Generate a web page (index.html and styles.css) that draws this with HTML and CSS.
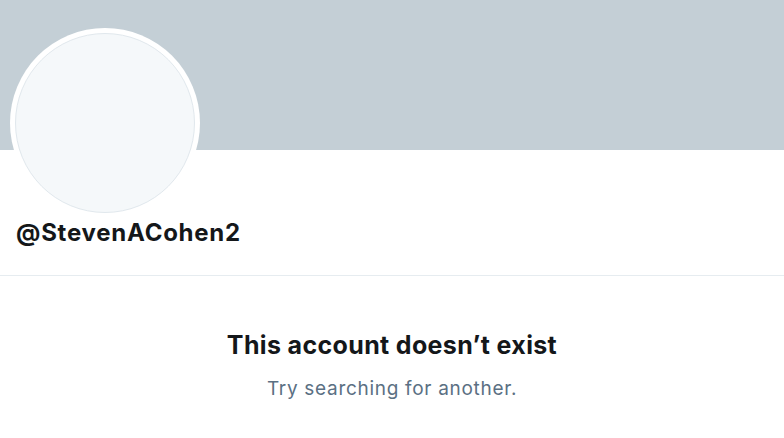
FILE: index.html
```html
<!DOCTYPE html>
<html>
<head>
<meta charset="utf-8">
<link rel="stylesheet" href="styles.css">
</head>
<body>
<div class="page">
  <div class="banner"></div>
  <div class="profile">
    <div class="avatar"><div class="avatar-inner"></div></div>
    <div class="handle">@StevenACohen2</div>
  </div>
  <div class="empty">
    <div class="title">This account doesn’t exist</div>
    <div class="subtitle">Try searching for another.</div>
  </div>
</div>
</body>
</html>
```
FILE: styles.css
```css
html, body {
  margin: 0;
  padding: 0;
  background: #ffffff;
}
.page {
  width: 784px;
  height: 438px;
  overflow: hidden;
  font-family: Inter, "Liberation Sans", sans-serif;
}
.banner {
  height: 150px;
  background: #c4cfd6;
}
.profile {
  display: flex;
  flex-direction: column;
  align-items: flex-start;
  padding: 0 16px;
  border-bottom: 1px solid #e6ecf0;
  height: 126px;
  box-sizing: border-box;
}
.avatar {
  width: 190px;
  height: 190px;
  margin-top: -122px;
  margin-left: -6px;
  border-radius: 50%;
  background: #ffffff;
  padding: 5px;
  box-sizing: border-box;
  flex: none;
}
.avatar-inner {
  width: 100%;
  height: 100%;
  border-radius: 50%;
  background: #f5f8fa;
  border: 1px solid #e1e8ed;
  box-sizing: border-box;
}
.handle {
  margin-top: 0;
  font-size: 24px;
  font-weight: 700;
  letter-spacing: 0.75px;
  line-height: 30px;
  color: #14171a;
}
.empty {
  display: flex;
  flex-direction: column;
  align-items: center;
  padding-top: 53px;
}
.title {
  font-size: 25px;
  font-weight: 700;
  letter-spacing: 0.35px;
  line-height: 32px;
  color: #14171a;
}
.subtitle {
  margin-top: 16px;
  font-size: 19px;
  letter-spacing: 0.7px;
  line-height: 24px;
  color: #5b7083;
}
```
